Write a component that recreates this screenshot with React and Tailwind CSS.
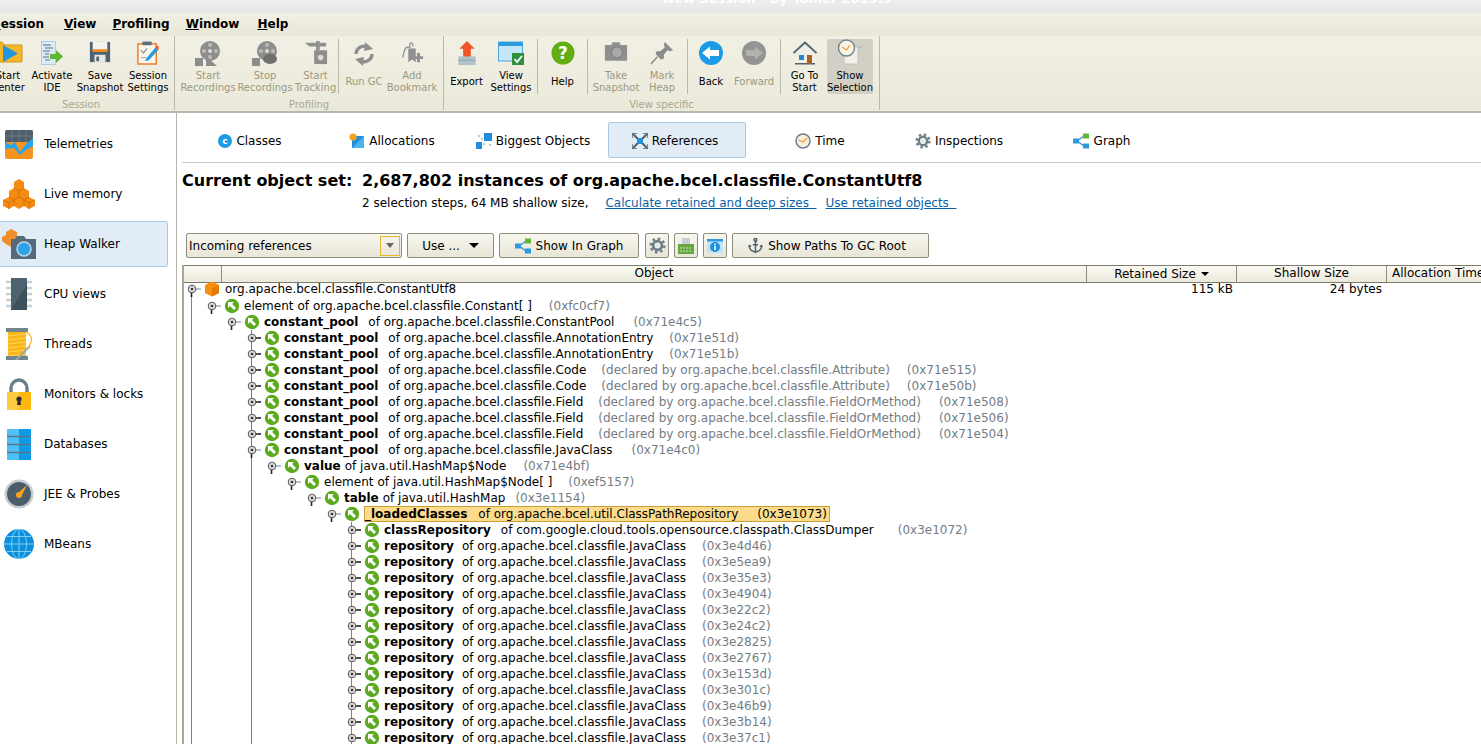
import React from 'react';
import { Anchor } from 'lucide-react';

const Gear = ({ size = 16, color = '#6f7f88' }) => (
  <svg width={size} height={size} viewBox="0 0 20 20">
    <circle cx="10" cy="10" r="8" fill="none" stroke={color} strokeWidth="3" strokeDasharray="3 3.28" />
    <circle cx="10" cy="10" r="5.2" fill="none" stroke={color} strokeWidth="3.2" />
    <circle cx="10" cy="10" r="2.8" fill="#e7e9e6" />
  </svg>
);

const Clock = ({ size = 16 }) => (
  <svg width={size} height={size} viewBox="0 0 16 16">
    <circle cx="8" cy="8" r="7" fill="#f7efe0" stroke="#6b7f8b" strokeWidth="1.5" />
    <path d="M3.5 7 L8 9 L12 5" fill="none" stroke="#f39a2b" strokeWidth="1.3" />
  </svg>
);

const GraphIcon = ({ size = 16 }) => (
  <svg width={size} height={size} viewBox="0 0 16 16">
    <path d="M4 8 L11 3 M4 8 L11 13" stroke="#3d8fc9" strokeWidth="1.3" />
    <rect x="0" y="5.5" width="6" height="5" fill="#2a9be0" />
    <rect x="10" y="0.5" width="6" height="5" fill="#5fb82e" />
    <rect x="10" y="10.5" width="6" height="5" fill="#2a9be0" />
  </svg>
);

const Reel = ({ badge }) => (
  <svg width="26" height="26" viewBox="0 0 26 26">
    <circle cx="15" cy="10" r="10" fill="#8d8d8d" />
    <circle cx="15" cy="10" r="2" fill="#dcdcd0" />
    <circle cx="15" cy="4" r="2" fill="#bcbcb0" />
    <circle cx="21" cy="10" r="2" fill="#bcbcb0" />
    <circle cx="9" cy="10" r="2" fill="#bcbcb0" />
    <circle cx="15" cy="16" r="2" fill="#bcbcb0" />
    <rect x="0" y="17" width="8" height="8" fill="#8d8d8d" />
    {badge ? (
      <ellipse cx="18" cy="18" rx="7" ry="5" fill="#6e6e6e" />
    ) : (
      <path d="M11 15 L22 25 L11 25 Z" fill="#8d8d8d" />
    )}
  </svg>
);

const toolIcons = {
  center: (
    <svg width="32" height="22" viewBox="0 0 32 22">
      <path d="M0 1 H10 L13 4 H30 V21 H0 Z" fill="#f6b62a" stroke="#d79617" />
      <path d="M11 4 L26 12.5 L11 21 Z" fill="#1f97e0" />
    </svg>
  ),
  ide: (
    <svg width="22" height="24" viewBox="0 0 22 24">
      <rect x="0.5" y="0.5" width="14" height="23" fill="#d9ecf7" stroke="#a8cde4" />
      <path d="M2 4 H10 M4 7 H12 M2 10 H9 M4 13 H8 M2 16 H8 M4 19 H9" stroke="#5a6f80" strokeWidth="1.2" />
      <path d="M9 13 H15 V9 L22 15.5 L15 22 V18 H9 Z" fill="#62b533" />
    </svg>
  ),
  save: (
    <svg width="22" height="22" viewBox="0 0 24 24">
      <path d="M1 1 H23 V23 H1 Z" fill="#4f6373" />
      <rect x="4" y="1" width="16" height="9" fill="#f4f4ee" />
      <rect x="4" y="9" width="16" height="3" fill="#f28a1e" />
      <rect x="6" y="15" width="12" height="8" fill="#e6e8e4" />
      <rect x="8" y="17" width="3" height="5" fill="#4f6373" />
    </svg>
  ),
  settings: (
    <svg width="22" height="24" viewBox="0 0 24 26">
      <rect x="1" y="3" width="20" height="22" fill="#fbf7ec" stroke="#ee7d2a" strokeWidth="1.6" />
      <rect x="6" y="0.5" width="10" height="4" fill="#5d6f7c" />
      <path d="M4 10 L7 13 L11 8" fill="none" stroke="#8d9aa3" strokeWidth="1.4" />
      <path d="M4 18 H10" stroke="#8d9aa3" />
      <path d="M10 19 L20 7 L23 10 L13 21 L9 22 Z" fill="#2e9be0" />
      <path d="M20 7 L22 4.5 L24 7 L23 10 Z" fill="#ea5a2a" />
    </svg>
  ),
  startRec: <Reel />,
  stopRec: <Reel badge />,
  tracking: (
    <svg width="24" height="24" viewBox="0 0 26 26">
      <path d="M1 2 H13 V0 H17 V2 H24 V6 H17 V10 H13 V6 H6 Z" fill="#909090" />
      <rect x="11" y="10" width="14" height="15" fill="#8d8d8d" />
      <circle cx="18" cy="18" r="3" fill="#dcdcd0" />
    </svg>
  ),
  gc: (
    <svg width="24" height="26" viewBox="0 0 24 26">
      <path d="M4 13 A8 8 0 0 1 17 7" fill="none" stroke="#8e8e8e" strokeWidth="3.4" />
      <path d="M13 1 L21 8 L12 10 Z" fill="#8e8e8e" />
      <path d="M20 13 A8 8 0 0 1 7 19" fill="none" stroke="#8e8e8e" strokeWidth="3.4" />
      <path d="M11 25 L3 18 L12 16 Z" fill="#8e8e8e" />
    </svg>
  ),
  bookmark: (
    <svg width="24" height="24" viewBox="0 0 24 26">
      <path d="M8 8 L12 8 L16 8 V23 L12 20 L8 23 Z" fill="#909090" />
      <path d="M10 8 C 8 1, 13 0, 13 6 M9 7 C 3 5, 3 15, 2 18" fill="none" stroke="#909090" strokeWidth="1.4" />
      <path d="M14 18 H24 M19 13 V23" stroke="#909090" strokeWidth="3.2" />
    </svg>
  ),
  exportIcon: (
    <svg width="20" height="25" viewBox="0 0 20 26">
      <path d="M10 0 L18 8 H14 V17 H6 V8 H2 Z" fill="#f0562a" />
      <rect x="1" y="16" width="18" height="9" fill="#b3c2c8" />
      <path d="M1 20 H19" stroke="#8ea1a9" />
    </svg>
  ),
  view: (
    <svg width="26" height="24" viewBox="0 0 26 24">
      <rect x="0.5" y="1" width="24" height="19" fill="#c4e6f9" stroke="#4ba5de" />
      <rect x="0.5" y="1" width="24" height="4" fill="#2f9be0" />
      <rect x="14" y="12" width="12" height="12" fill="#2f8f3c" />
      <path d="M16.5 18 L19 21 L24 15" fill="none" stroke="#fff" strokeWidth="1.8" />
    </svg>
  ),
  help: (
    <svg width="24" height="24" viewBox="0 0 24 24">
      <circle cx="12" cy="12" r="11.5" fill="#63ad14" />
      <text x="12" y="18" textAnchor="middle" fontFamily="DejaVu Sans" fontWeight="700" fontSize="17" fill="#fff">?</text>
    </svg>
  ),
  camera: (
    <svg width="24" height="21" viewBox="0 0 26 22">
      <path d="M1 4 H8 L9 1 H17 L18 4 H25 V21 H1 Z" fill="#8f8f8f" />
      <circle cx="14" cy="12" r="6" fill="#a9a9a9" stroke="#777" />
    </svg>
  ),
  pin: (
    <svg width="24" height="24" viewBox="0 0 26 26">
      <path d="M16 1 L25 10 L22 11 L19 10 L15 15 L15 19 L12 20 L6 14 L7 11 L11 11 L16 7 L15 4 Z" fill="#8b8b8b" />
      <path d="M8 17 L1 25" stroke="#8b8b8b" strokeWidth="1.6" />
    </svg>
  ),
  back: (
    <svg width="24" height="24" viewBox="0 0 24 24">
      <circle cx="12" cy="12" r="12" fill="#1b9be6" />
      <path d="M3 12 L11 5.5 V9 H20 V15 H11 V18.5 Z" fill="#fff" />
    </svg>
  ),
  forward: (
    <svg width="24" height="24" viewBox="0 0 24 24">
      <circle cx="12" cy="12" r="12" fill="#949494" />
      <path d="M21 12 L13 5.5 V9 H4 V15 H13 V18.5 Z" fill="#b3b3ab" />
    </svg>
  ),
  home: (
    <svg width="24" height="24" viewBox="0 0 24 24">
      <path d="M4 11 L12 3 L20 11 V23 H4 Z" fill="#f0efe6" />
      <path d="M0.5 12 L12 1.5 L23.5 12" fill="none" stroke="#4f6373" strokeWidth="1.8" />
      <rect x="2" y="22" width="20" height="1.5" fill="#4f6373" />
      <rect x="6" y="14" width="5" height="5" fill="#2e86c8" />
      <rect x="14" y="14" width="5" height="9" fill="#a8621f" />
    </svg>
  ),
  selection: (
    <svg width="26" height="26" viewBox="0 0 26 26" className="-mt-[2px]">
      <rect x="7" y="7" width="14" height="18" fill="#f1f1e9" stroke="#c2c2b8" />
      <path d="M17 7 H25 V9 H21" fill="#bfc3c0" />
      <circle cx="9.5" cy="9" r="8" fill="#faf4e7" stroke="#71858f" strokeWidth="1.4" />
      <path d="M5 8 L9.5 11 L13 6" fill="none" stroke="#f39a2b" strokeWidth="1.2" />
    </svg>
  ),
};

const Tool = ({ icon, label, width, disabled, active }) => (
  <div className={`flex flex-col items-center h-[55px] shrink-0 ${width} ${active ? 'bg-[#d2d0c4] rounded-[2px]' : ''}`}>
    <div className="h-[30px] pt-[2px] flex items-start justify-center">{toolIcons[icon]}</div>
    <div className={`h-[25px] flex items-center text-center leading-[12px] text-[10px] whitespace-pre ${disabled ? 'text-[#9a9a80]' : 'text-black'}`}>
      {label}
    </div>
  </div>
);

const ToolSep = () => <div className="w-px h-[55px] bg-[#b9b8aa] shrink-0" />;

const ToolGroup = ({ label, className, children }) => (
  <div className={`flex flex-col shrink-0 h-[74px] border-r border-[#b9b8aa] ${className}`}>
    <div className="flex h-[55px] mt-[3px]">{children}</div>
    <div className="h-[16px] text-center text-[10px] leading-[22px] text-[#a8a890]">{label}</div>
  </div>
);

const Menu = ({ first, rest, className }) => (
  <span className={className}>
    <span className="underline">{first}</span>
    {rest}
  </span>
);

const sideIcons = {
  telemetries: (
    <svg width="28" height="29" viewBox="0 0 28 29">
      <rect x="0" y="0" width="28" height="29" rx="2" fill="#f7941d" />
      <path d="M0 2 A2 2 0 0 1 2 0 H26 A2 2 0 0 1 28 2 V12 H0 Z" fill="#4e5f6b" />
      <path d="M7 0 V12 M14 0 V12 M21 0 V12 M0 6 H28" stroke="#6b7a84" />
      <path d="M0 12 L6 15 L10 12 L15 22 L21 14 L28 8 V16 L21 20 L15 25 L9 18 L0 19 Z" fill="#26a5ee" />
    </svg>
  ),
  live: (
    <svg width="32" height="30" viewBox="0 0 32 30">
      <path d="M16 0 L21 3 V9 L26 12 V18 L32 21 V27 L26 30 L21 27 L16 30 L11 27 L6 30 L0 27 V21 L6 18 V12 L11 9 V3 Z" fill="#f68b12" />
      <path d="M11 9 L16 12 L21 9 M6 18 L11 21 L16 18 L21 21 L26 18 M16 12 V18 M11 21 V27 M21 21 V27 M0 21 L6 24 L11 21 M21 21 L26 24 L32 21 M6 24 V30 M26 24 V30" fill="none" stroke="#d96f05" />
    </svg>
  ),
  heap: (
    <svg width="34" height="30" viewBox="0 0 34 30">
      <path d="M9 0 L15 3 V9 L20 12 V18 L14 21 L9 18 L4 15 L0 12 V8 L4 6 V3 Z" fill="#ee8f2a" />
      <path d="M9 10 H13 L15 7 H22 L24 10 H34 V30 H9 Z" fill="#546a7a" />
      <circle cx="22" cy="20" r="7" fill="#2ea3ea" stroke="#bcd8ea" strokeWidth="1.5" />
    </svg>
  ),
  cpu: (
    <svg width="26" height="32" viewBox="0 0 26 32">
      <path d="M0 4 H26 M0 10 H26 M0 16 H26 M0 22 H26 M0 28 H26" stroke="#c7d0d4" strokeWidth="2.4" />
      <rect x="5" y="0" width="16" height="32" fill="#4d626e" />
      <path d="M5 32 L21 6 V32 Z" fill="#3d505b" />
    </svg>
  ),
  threads: (
    <svg width="30" height="32" viewBox="0 0 30 32">
      <rect x="2" y="0" width="22" height="4" fill="#71858f" />
      <rect x="4" y="4" width="18" height="26" fill="#fbb616" />
      <path d="M4 8 L22 6 M4 12 L22 10 M4 16 L22 14 M4 20 L22 18 M4 24 L22 22 M4 28 L22 26" stroke="#ffd65e" />
      <rect x="2" y="28" width="22" height="4" fill="#71858f" />
      <path d="M12 32 L26 18" stroke="#9aa8ae" strokeWidth="2" />
      <path d="M22 4 C30 8, 28 14, 24 20" fill="none" stroke="#fbb616" strokeWidth="1.2" />
    </svg>
  ),
  monitors: (
    <svg width="24" height="32" viewBox="0 0 24 32">
      <path d="M4 15 V10 A8 8 0 0 1 20 10 V15" fill="none" stroke="#6b7f8b" strokeWidth="3.4" />
      <rect x="0" y="14" width="24" height="18" fill="#ffb811" />
      <rect x="0" y="14" width="12" height="18" fill="#ffcb45" />
      <circle cx="12" cy="21" r="2.6" fill="#2c2c2c" />
      <path d="M10.8 22 H13.2 L14 27 H10 Z" fill="#2c2c2c" />
    </svg>
  ),
  databases: (
    <svg width="24" height="31" viewBox="0 0 24 31">
      <rect x="0" y="0" width="24" height="31" fill="#0d9be6" />
      <rect x="0" y="0" width="12" height="31" fill="#4dc1f7" />
      <path d="M0 7.5 H24 M0 15.5 H24 M0 23.5 H24" stroke="#5a7484" strokeWidth="1.4" />
    </svg>
  ),
  jee: (
    <svg width="30" height="30" viewBox="0 0 30 30">
      <circle cx="15" cy="15" r="14.5" fill="#c5cdd1" />
      <circle cx="15" cy="15" r="12" fill="#4a5d6b" />
      <path d="M13 15 L23 6 L17 18 Z" fill="#f9a11b" />
      <circle cx="15" cy="16" r="3" fill="#f9a11b" />
    </svg>
  ),
  mbeans: (
    <svg width="30" height="30" viewBox="0 0 30 30">
      <circle cx="15" cy="15" r="15" fill="#0d8fdc" />
      <path d="M0 15 H30 M3 7.5 H27 M3 22.5 H27 M15 0 V30" stroke="#7cd0f8" strokeWidth="1" />
      <ellipse cx="15" cy="15" rx="7.5" ry="15" fill="none" stroke="#7cd0f8" />
    </svg>
  ),
};

const sideItems = [
  ['telemetries', 'Telemetries'],
  ['live', 'Live memory'],
  ['heap', 'Heap Walker', true],
  ['cpu', 'CPU views'],
  ['threads', 'Threads'],
  ['monitors', 'Monitors & locks'],
  ['databases', 'Databases'],
  ['jee', 'JEE & Probes'],
  ['mbeans', 'MBeans'],
];

// third value nudges the tab's content so icon and label land where the reference has them
const tabs = [
  ['Classes', <svg key="c" width="14" height="14" viewBox="0 0 14 14"><circle cx="7" cy="7" r="7" fill="#1f9be6" /><text x="7" y="10" textAnchor="middle" fontFamily="DejaVu Sans" fontWeight="700" fontSize="9" fill="#fff">c</text></svg>, 'pr-[2px] gap-[4px]'],
  ['Allocations', <svg key="a" width="16" height="16" viewBox="0 0 16 16"><rect x="3" y="3" width="12" height="12" fill="#1f8fdc" /><path d="M3 15 L15 3 V15 Z" fill="#4db4ee" /><circle cx="4" cy="4" r="3.6" fill="#f7a11c" /></svg>, 'pr-[2px] gap-[4px]'],
  ['Biggest Objects', <svg key="b" width="16" height="16" viewBox="0 0 16 16"><rect x="8" y="0" width="8" height="8" fill="#1f8fdc" /><rect x="0" y="9" width="6" height="7" fill="#1f8fdc" /><rect x="7" y="10" width="2" height="2" fill="#b8c8d2" /><rect x="2" y="2" width="2" height="2" fill="#b8c8d2" /><rect x="5" y="5" width="2" height="2" fill="#b8c8d2" /><rect x="13" y="11" width="2" height="2" fill="#b8c8d2" /></svg>, 'pr-[4px] gap-[4px]'],
  ['References', <svg key="r" width="16" height="16" viewBox="0 0 16 16"><rect x="5" y="5" width="6" height="6" fill="#1f9be6" /><path d="M1 1 L6 6 M15 1 L10 6 M1 15 L6 10 M15 15 L10 10" stroke="#4f6373" strokeWidth="2" /><path d="M0 5 V0 H5 M11 0 H16 V5 M0 11 V16 H5 M16 11 V16 H11" fill="none" stroke="#4f6373" strokeWidth="1.4" /></svg>, 'pr-[4px] gap-[4px]'],
  ['Time', <Clock key="t" />, 'pl-[2px] gap-[4px]'],
  ['Inspections', <Gear key="i" size={16} />, 'pr-[4px] gap-[4px]'],
  ['Graph', <GraphIcon key="g" />, 'pr-[3px] gap-[5px]'],
];

const BUTTON = 'h-[25px] shrink-0 flex items-center justify-center rounded-[2px] border border-[#8f8d7c] bg-gradient-to-b from-[#f8f7ef] to-[#e8e6d7]';

const Toggler = ({ through, expanded, tall }) => (
  <svg width="20" height={tall ? 17 : 16} viewBox={tall ? '0 0 20 17' : '0 0 20 16'} className="shrink-0 block">
    {through && <path d="M7.5 0 V16" stroke="#6c82a6" />}
    {tall && <path d="M7.5 16 V17" stroke="#6c82a6" />}
    {expanded ? (
      <>
        <path d="M12 8 H17" stroke="#6c82a6" />
        <path d="M7.5 11 V16" stroke="#222" strokeWidth="1.6" />
      </>
    ) : (
      <path d="M12 8 H17" stroke="#222" strokeWidth="1.6" />
    )}
    <circle cx="8" cy="8" r="3.8" fill="#dedede" stroke="#555" />
    <circle cx="8" cy="8" r="1.3" fill="#333" />
  </svg>
);

const RefIcon = () => (
  <svg width="16" height="16" viewBox="0 0 16 16" className="shrink-0 block">
    <circle cx="8" cy="8" r="7.2" fill="#5cab1e" />
    <path d="M4 4 H10 L8 6 L12 10 L10 12 L6 8 L4 10 Z" fill="#fff" />
  </svg>
);

const Cube = () => (
  <svg width="16" height="16" viewBox="0 0 16 16" className="shrink-0 block">
    <path d="M8 0.5 L15 4 V12 L8 15.5 L1 12 V4 Z" fill="#f98e0d" />
    <path d="M8 7.5 V15.5 L15 12 V4 Z" fill="#e57a05" />
  </svg>
);

const CP = 'constant_pool';
const AE = 'org.apache.bcel.classfile.AnnotationEntry';
const CODE = 'org.apache.bcel.classfile.Code';
const FIELD = 'org.apache.bcel.classfile.Field';
const ATTR = '(declared by org.apache.bcel.classfile.Attribute)';
const FOM = '(declared by org.apache.bcel.classfile.FieldOrMethod)';
const JC = 'org.apache.bcel.classfile.JavaClass';

const repoAddrs = ['0x3e4d46', '0x3e5ea9', '0x3e35e3', '0x3e4904', '0x3e22c2', '0x3e24c2', '0x3e2825', '0x3e2767', '0x3e153d', '0x3e301c', '0x3e46b9', '0x3e3b14', '0x3e37c1'];

// ofGap and addrGap hold the spacing classes in front of "of ..." and the address
const rows = [
  { depth: 1, expanded: true, plain: 'element', ofGap: 'ml-[4px]', of: 'org.apache.bcel.classfile.Constant[ ]', addrGap: 'ml-[17px]', addr: '0xfc0cf7' },
  { depth: 2, expanded: true, name: CP, ofGap: 'ml-[10px]', of: 'org.apache.bcel.classfile.ConstantPool', addrGap: 'ml-[19px]', addr: '0x71e4c5' },
  { depth: 3, name: CP, ofGap: 'ml-[10px]', of: AE, addrGap: 'ml-[16px]', addr: '0x71e51d' },
  { depth: 3, name: CP, ofGap: 'ml-[10px]', of: AE, addrGap: 'ml-[16px]', addr: '0x71e51b' },
  { depth: 3, name: CP, ofGap: 'ml-[10px]', of: CODE, note: ATTR, addrGap: 'ml-[17px]', addr: '0x71e515' },
  { depth: 3, name: CP, ofGap: 'ml-[10px]', of: CODE, note: ATTR, addrGap: 'ml-[17px]', addr: '0x71e50b' },
  { depth: 3, name: CP, ofGap: 'ml-[10px]', of: FIELD, note: FOM, addrGap: 'ml-[18px]', addr: '0x71e508' },
  { depth: 3, name: CP, ofGap: 'ml-[10px]', of: FIELD, note: FOM, addrGap: 'ml-[18px]', addr: '0x71e506' },
  { depth: 3, name: CP, ofGap: 'ml-[10px]', of: FIELD, note: FOM, addrGap: 'ml-[18px]', addr: '0x71e504' },
  { depth: 3, expanded: true, name: CP, ofGap: 'ml-[10px]', of: JC, addrGap: 'ml-[19px]', addr: '0x71e4c0' },
  { depth: 4, expanded: true, name: 'value', ofGap: 'ml-[4px]', of: 'java.util.HashMap$Node', addrGap: 'ml-[17px]', addr: '0x71e4bf' },
  { depth: 5, expanded: true, plain: 'element', ofGap: 'ml-[4px]', of: 'java.util.HashMap$Node[ ]', addrGap: 'ml-[16px]', addr: '0xef5157' },
  { depth: 6, expanded: true, name: 'table', ofGap: 'ml-[4px]', of: 'java.util.HashMap', addrGap: 'ml-[10px]', addr: '0x3e1154' },
  { depth: 7, expanded: true, highlight: true, name: '_loadedClasses', ofGap: 'ml-[11px]', of: 'org.apache.bcel.util.ClassPathRepository', addrGap: 'ml-[19px]', addr: '0x3e1073' },
  { depth: 8, name: 'classRepository', ofGap: 'ml-[10px]', of: 'com.google.cloud.tools.opensource.classpath.ClassDumper', addrGap: 'ml-[24px]', addr: '0x3e1072' },
  ...repoAddrs.map((addr) => ({ depth: 8, name: 'repository', ofGap: 'ml-[8px]', of: JC, addrGap: 'ml-[16px]', addr })),
];

const hasGuide = (i, depth) => i === 0 || (i === 3 && depth > 3);

const TreeRow = ({ row }) => {
  const guides = Array.from({ length: row.depth }, (_, i) => i);
  const body = (
    <>
      {row.name && <span className="font-bold">{row.name}</span>}
      {row.plain && <span>{row.plain}</span>}
      <span className={row.ofGap}>of {row.of}</span>
      {row.note && <span className="ml-[15px] text-[#747c84]">{row.note}</span>}
      <span className={`${row.addrGap} ${row.highlight ? '' : 'text-[#747c84]'}`}>({row.addr})</span>
    </>
  );
  return (
    <div className="flex h-4 shrink-0 items-center whitespace-pre">
      {guides.map((i) => (
        <div key={i} className="w-5 h-4 shrink-0">
          {hasGuide(i, row.depth) && <div className="ml-[7px] w-px h-4 bg-[#6c82a6]" />}
        </div>
      ))}
      <Toggler through={row.depth === 3 || row.depth === 8} expanded={row.expanded} />
      <RefIcon />
      {row.highlight ? (
        <div className="ml-[4px] h-[16px] w-[466px] flex items-center bg-[#fcdc8c] border border-[#c9a133]">{body}</div>
      ) : (
        <div className="ml-[4px] flex items-center">{body}</div>
      )}
    </div>
  );
};

export default function App() {
  return (
    <div className="w-[1481px] h-[744px] overflow-hidden flex flex-col bg-white text-black text-[12px] font-['DejaVu_Sans',sans-serif]">
      {/* window title, cut off by the top of the screen */}
      <div className="h-[13px] shrink-0 overflow-hidden bg-gradient-to-b from-[#eeeeee] to-[#e6e6e6] flex justify-center pl-[74px]">
        <span className="mt-[-9px] text-[13px] leading-[16px] font-bold text-white">New Session - by Tomer 2019.3</span>
      </div>

      {/* menu bar */}
      <div className="h-[23px] shrink-0 flex items-center gap-4 pl-0 text-[12px] font-bold leading-[23px] bg-gradient-to-b from-[#f0f0e3] to-[#e9e7d7]">
        <Menu first="S" rest="ession" className="ml-[-8px]" />
        <Menu first="V" rest="iew" className="ml-[4px]" />
        <Menu first="P" rest="rofiling" />
        <Menu first="W" rest="indow" />
        <Menu first="H" rest="elp" className="ml-[2px]" />
      </div>

      {/* toolbar */}
      <div className="h-[77px] shrink-0 flex items-start bg-gradient-to-b from-[#f1f0e4] to-[#ebe9da] border-b-2 border-[#b9b8ac]">
        <ToolGroup label="Session" className="ml-[-12px] w-[187px]">
          <Tool icon="center" label={'Start\nCenter'} width="w-[40px]" />
          <Tool icon="ide" label={'Activate\nIDE'} width="w-[48px]" />
          <Tool icon="save" label={'Save\nSnapshot'} width="w-[48px]" />
          <Tool icon="settings" label={'Session\nSettings'} width="w-[48px]" />
        </ToolGroup>
        <ToolGroup label="Profiling" className="w-[269px]">
          <div className="w-[4px]" />
          <Tool icon="startRec" label={'Start\nRecordings'} width="w-[58px]" disabled />
          <Tool icon="stopRec" label={'Stop\nRecordings'} width="w-[56px]" disabled />
          <Tool icon="tracking" label={'Start\nTracking'} width="w-[45px]" disabled />
          <ToolSep />
          <div className="w-px" />
          <Tool icon="gc" label="Run GC" width="w-[48px]" disabled />
          <Tool icon="bookmark" label={'Add\nBookmark'} width="w-[48px]" disabled />
        </ToolGroup>
        <ToolGroup label="View specific" className="w-[436px]">
          <Tool icon="exportIcon" label="Export" width="w-[45px]" />
          <Tool icon="view" label={'View\nSettings'} width="w-[44px]" />
          <div className="w-[4px]" />
          <ToolSep />
          <Tool icon="help" label="Help" width="w-[49px]" />
          <ToolSep />
          <Tool icon="camera" label={'Take\nSnapshot'} width="w-[56px]" disabled />
          <Tool icon="pin" label={'Mark\nHeap'} width="w-[36px]" disabled />
          <div className="w-[7px]" />
          <ToolSep />
          <Tool icon="back" label="Back" width="w-[46px]" />
          <Tool icon="forward" label="Forward" width="w-[40px]" disabled />
          <div className="w-[6px]" />
          <ToolSep />
          <div className="w-[1px]" />
          <Tool icon="home" label={'Go To\nStart'} width="w-[45px]" />
          <Tool icon="selection" label={'Show\nSelection'} width="w-[46px]" active />
        </ToolGroup>
      </div>

      <div className="flex flex-1 min-h-0">
        {/* sidebar */}
        <div className="w-[177px] shrink-0 border-r border-[#b7b6aa] pt-[5px] pr-[8px]">
          {sideItems.map(([icon, label, selected]) => (
            <div key={label} className="h-[50px] py-[3px]">
              <div className={`h-[46px] flex items-center rounded-r-[3px] ${selected ? 'bg-[#e2ecf6] border border-l-0 border-[#a9c9e3]' : ''}`}>
                <div className="w-[36px] ml-[1px] shrink-0 flex justify-center">{sideIcons[icon]}</div>
                <span className="ml-[7px]">{label}</span>
              </div>
            </div>
          ))}
        </div>

        {/* heap walker view */}
        <div className="flex-1 min-w-0 flex flex-col pl-[5px]">
          <div className="h-[50px] shrink-0 pt-[9px] border-b border-[#c6c6c6] flex gap-1">
            {tabs.map(([label, icon, nudge]) => (
              <div
                key={label}
                className={`w-[138px] h-[36px] shrink-0 flex items-center justify-center pt-[2px] rounded-[2px] ${nudge} ${label === 'References' ? 'bg-[#e2ecf6] border border-[#a9c9e3]' : ''}`}
              >
                {icon}
                <span>{label}</span>
              </div>
            ))}
          </div>

          <div className="h-[28px] shrink-0 flex items-end text-[16px] leading-[20px] font-bold whitespace-pre">
            <span className="w-[180px]">Current object set:</span>
            <span>2,687,802 instances of org.apache.bcel.classfile.ConstantUtf8</span>
          </div>
          <div className="h-[20px] shrink-0 flex items-end pl-[180px] leading-[16px] whitespace-pre">
            <span>2 selection steps, 64 MB shallow size,</span>
            <a className="ml-[17px] text-[#0b5fa8] underline">{'Calculate retained and deep sizes  '}</a>
            <a className="ml-[9px] text-[#0b5fa8] underline">{'Use retained objects  '}</a>
          </div>

          <div className="mt-[22px] shrink-0 flex items-center pl-[4px]">
            <div className={`${BUTTON} w-[216px] !justify-between pl-[2px] pr-[1px]`}>
              <span>Incoming references</span>
              <div className="w-[20px] h-[20px] border border-[#e6b830] flex items-center justify-center">
                <div className="w-0 h-0 border-x-[4px] border-x-transparent border-t-[5px] border-t-[#666]" />
              </div>
            </div>
            <div className={`${BUTTON} w-[87px] ml-[5px] gap-[9px]`}>
              <span>Use ...</span>
              <div className="w-0 h-0 border-x-[5px] border-x-transparent border-t-[5px] border-t-black" />
            </div>
            <div className={`${BUTTON} w-[140px] ml-[5px] gap-[5px]`}>
              <GraphIcon />
              <span>Show In Graph</span>
            </div>
            <div className={`${BUTTON} w-[24px] ml-[6px]`}><Gear size={17} /></div>
            <div className={`${BUTTON} w-[24px] ml-[5px]`}>
              <svg width="16" height="16" viewBox="0 0 16 16">
                <rect x="4" y="0" width="8" height="6" fill="#c8ced2" />
                <rect x="0" y="6" width="16" height="10" fill="#66a83f" />
                <path d="M2 10 H14 M2 13 H14" stroke="#cfe6bd" strokeDasharray="2 1" />
              </svg>
            </div>
            <div className={`${BUTTON} w-[24px] ml-[5px]`}>
              <svg width="16" height="16" viewBox="0 0 16 16">
                <rect x="0" y="1" width="16" height="14" fill="#bfe3f8" />
                <rect x="0" y="1" width="16" height="2.5" fill="#2d9be0" />
                <circle cx="8" cy="9" r="5" fill="#1d8fdc" />
                <rect x="7.2" y="8" width="1.6" height="4" fill="#fff" />
                <rect x="7.2" y="5.8" width="1.6" height="1.5" fill="#fff" />
              </svg>
            </div>
            <div className={`${BUTTON} w-[197px] ml-[5px] gap-[4px] pr-[8px]`}>
              <Anchor size={17} color="#52636f" strokeWidth={2.2} />
              <span>Show Paths To GC Root</span>
            </div>
          </div>

          {/* tree table */}
          <div className="mt-[7px] flex-1 min-h-0 overflow-hidden flex flex-col border-l-2 border-[#a8a79a]">
            <div className="h-[16px] shrink-0 flex border-y border-[#7d7c6c] bg-gradient-to-b from-[#fbfaf3] to-[#ebe9db] leading-[15px] box-content">
              <div className="w-[38px] shrink-0 border-r border-[#8f8e7e]" />
              <div className="w-[865px] shrink-0 border-r border-[#8f8e7e] text-center">Object</div>
              <div className="w-[150px] shrink-0 border-r border-[#8f8e7e] flex items-center justify-center gap-[5px]">
                <span>Retained Size</span>
                <div className="w-0 h-0 border-x-[4px] border-x-transparent border-t-[4px] border-t-black" />
              </div>
              <div className="w-[150px] shrink-0 border-r border-[#8f8e7e] text-center">Shallow Size</div>
              <div className="flex-1 pl-[5px] whitespace-pre">Allocation Time</div>
            </div>
            <div className="flex h-[17px] shrink-0 mt-[-2px] items-start leading-4">
              <div className="w-[902px] shrink-0 flex items-start">
                <Toggler expanded tall />
                <Cube />
                <span className="ml-[5px]">org.apache.bcel.classfile.ConstantUtf8</span>
              </div>
              <div className="w-[147px] shrink-0 text-right">115 kB</div>
              <div className="w-[149px] shrink-0 text-right">24 bytes</div>
            </div>
            {rows.map((row, i) => (
              <TreeRow key={i} row={row} />
            ))}
          </div>
        </div>
      </div>
    </div>
  );
}
